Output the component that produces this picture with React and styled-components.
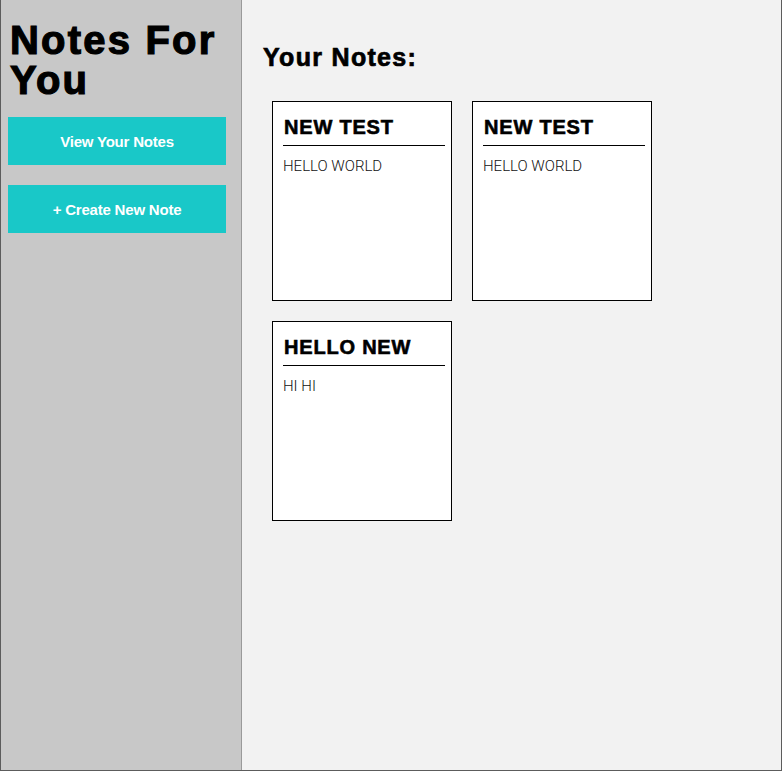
import React from 'react';
import styled, { createGlobalStyle } from 'styled-components';

const GlobalStyle = createGlobalStyle`
    * {
        box-sizing: border-box;
    }

    body {
        margin: 0;
        font-family: 'Liberation Sans', Arial, sans-serif;
        background: #fff;
    }
`;

const notes = [
    { id: 1, title: "NEW TEST", body: "HELLO WORLD" },
    { id: 2, title: "NEW TEST", body: "HELLO WORLD" },
    { id: 3, title: "HELLO NEW", body: "HI HI" },
];

function App() {
    return (
        <>
            <GlobalStyle />
            <Page>
                <Sidebar>
                    <Title>Notes For You</Title>
                    <NavButton>View Your Notes</NavButton>
                    <NavButton>+ Create New Note</NavButton>
                </Sidebar>

                <Main>
                    <Heading>Your Notes:</Heading>
                    <NoteGrid>
                        {notes.map((note) => (
                            <Card key={note.id}>
                                <CardTitle>{note.title}</CardTitle>
                                <Divider />
                                <CardBody>{note.body}</CardBody>
                            </Card>
                        ))}
                    </NoteGrid>
                </Main>
            </Page>
        </>
    );
}

const Page = styled.div`
    display: flex;
    width: 782px;
    height: 100vh;
    border: 1px solid #5c5c5c;
    border-top: none;
`;

const Sidebar = styled.aside`
    width: 241px;
    flex-shrink: 0;
    padding: 0 7px;
    background: #c8c8c8;
    border-right: 1px solid #9a9a9a;
`;

const Title = styled.h1`
    margin: 20px 0 17px 2px;
    font-size: 40px;
    line-height: 40px;
    font-weight: 700;
    letter-spacing: 2.2px;
    color: #000;
    -webkit-text-stroke: 1.2px #000;
`;

const NavButton = styled.button`
    display: flex;
    align-items: center;
    justify-content: center;
    width: 218px;
    height: 48px;
    margin-bottom: 20px;
    padding: 0;
    border: none;
    background: #19c8c8;
    color: #fff;
    font-family: 'Liberation Sans', Arial, sans-serif;
    font-size: 15px;
    font-weight: 700;
    letter-spacing: -0.2px;
    cursor: pointer;
`;

const Main = styled.main`
    flex: 1;
    padding: 0 20px;
    background: #f2f2f2;
`;

const Heading = styled.h2`
    margin: 42px 0 19px 1px;
    font-size: 25px;
    line-height: 30px;
    font-weight: 700;
    letter-spacing: 1.3px;
    color: #000;
    -webkit-text-stroke: 0.7px #000;
`;

const NoteGrid = styled.div`
    display: flex;
    flex-wrap: wrap;
`;

const Card = styled.div`
    width: 180px;
    height: 200px;
    margin: 10px;
    padding: 10px 6px 10px 10px;
    background: #fff;
    border: 1px solid #000;
`;

const CardTitle = styled.h3`
    margin: 3px 0 0 1px;
    font-size: 20px;
    line-height: 24px;
    font-weight: 700;
    letter-spacing: 0.8px;
    color: #000;
    -webkit-text-stroke: 0.6px #000;
`;

const Divider = styled.hr`
    margin: 6px 0 11px;
    border: none;
    border-top: 1px solid #000;
`;

const CardBody = styled.p`
    margin: 0;
    font-family: Roboto, 'Liberation Sans', sans-serif;
    font-size: 15px;
    line-height: 18px;
    font-weight: 300;
    color: #111;
`;

export default App;
